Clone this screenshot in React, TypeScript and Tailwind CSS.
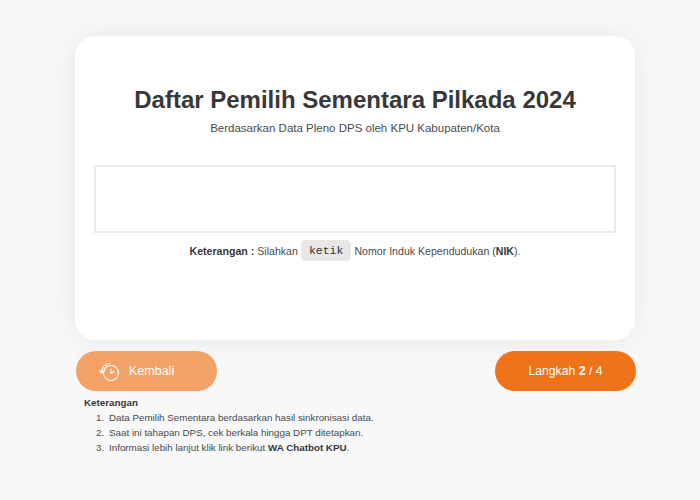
import React from "react";

function HistoryIcon() {
  return (
    <svg width="22" height="20" viewBox="0 0 22 20" fill="none" stroke="white" strokeWidth="1.1" strokeLinecap="round" strokeLinejoin="round">
      <circle cx="12" cy="12" r="7.5" />
      <path d="M12 8v4.3l3-1.8" />
      <path d="M2.6 11.5C2.6 6.5 6 2.6 11 2.2" />
      <path d="M5.2 9.5C5.8 7.6 7 6 8.6 5.2" />
      <path d="M0.8 9.6l1.8 2.2 2.3-1.7" />
    </svg>
  );
}

export default function App() {
  return (
    <div className="w-[700px] h-[500px] bg-[#f8f8f8] overflow-hidden text-[#333] font-['Liberation_Sans',Arial,sans-serif]">
      <div className="flex flex-col pl-[75px] pr-[65px] pt-9">
        <div className="h-[304px] bg-white rounded-[20px] shadow-[0_0_30px_rgba(0,0,0,0.07)] px-[19px] pt-[50px] flex flex-col items-center">
          <h1 className="text-[24px] leading-[28px] font-bold text-[#383838]">Daftar Pemilih Sementara Pilkada 2024</h1>
          <p className="mt-[7px] text-[11.5px] leading-[14px] text-[#4a4a4a]">Berdasarkan Data Pleno DPS oleh KPU Kabupaten/Kota</p>
          <div className="mt-[30px] w-[522px] h-[68px] shrink-0 bg-white border-2 border-[#ebebeb]"></div>
          <p className="mt-[7px] text-[10.6px] leading-[20px] text-[#4a4a4a] flex items-center">
            <b className="text-[#383838]">Keterangan :</b>
            <span className="ml-[3px]">Silahkan</span>
            <code className="mx-[3px] h-[21px] flex items-center rounded-[5px] bg-[#e9e6e6] px-[8px] font-['Liberation_Mono',monospace] text-[11.5px] text-[#333]">ketik</code>
            <span>Nomor Induk Kependudukan (<b className="text-[#383838]">NIK</b>).</span>
          </p>
        </div>
        <div className="mt-[11px] -mr-[1px] ml-[1px] flex justify-between">
          <button className="w-[141px] h-[40px] rounded-full bg-[#f3a268] text-white text-[12.5px] flex items-center pl-[23px]">
            <HistoryIcon />
            <span className="ml-[8px]">Kembali</span>
          </button>
          <button className="w-[141px] h-[40px] rounded-full bg-[#ef7318] text-white text-[12.2px] flex items-center justify-center">
            <span>Langkah <b className="text-[12.5px]">2</b> / 4</span>
          </button>
        </div>
        <div className="mt-[5px] ml-[9px] text-[9.8px] leading-[15px] text-[#4a4a4a]">
          <b className="block leading-[14px] text-[#383838]">Keterangan</b>
          <ol className="list-decimal pl-[23px]">
            <li className="pl-[2px]">Data Pemilih Sementara berdasarkan hasil sinkronisasi data.</li>
            <li className="pl-[2px]">Saat ini tahapan DPS, cek berkala hingga DPT ditetapkan.</li>
            <li className="pl-[2px]">Informasi lebih lanjut klik link berikut <b className="text-[#383838]">WA Chatbot KPU</b>.</li>
          </ol>
        </div>
      </div>
    </div>
  );
}
